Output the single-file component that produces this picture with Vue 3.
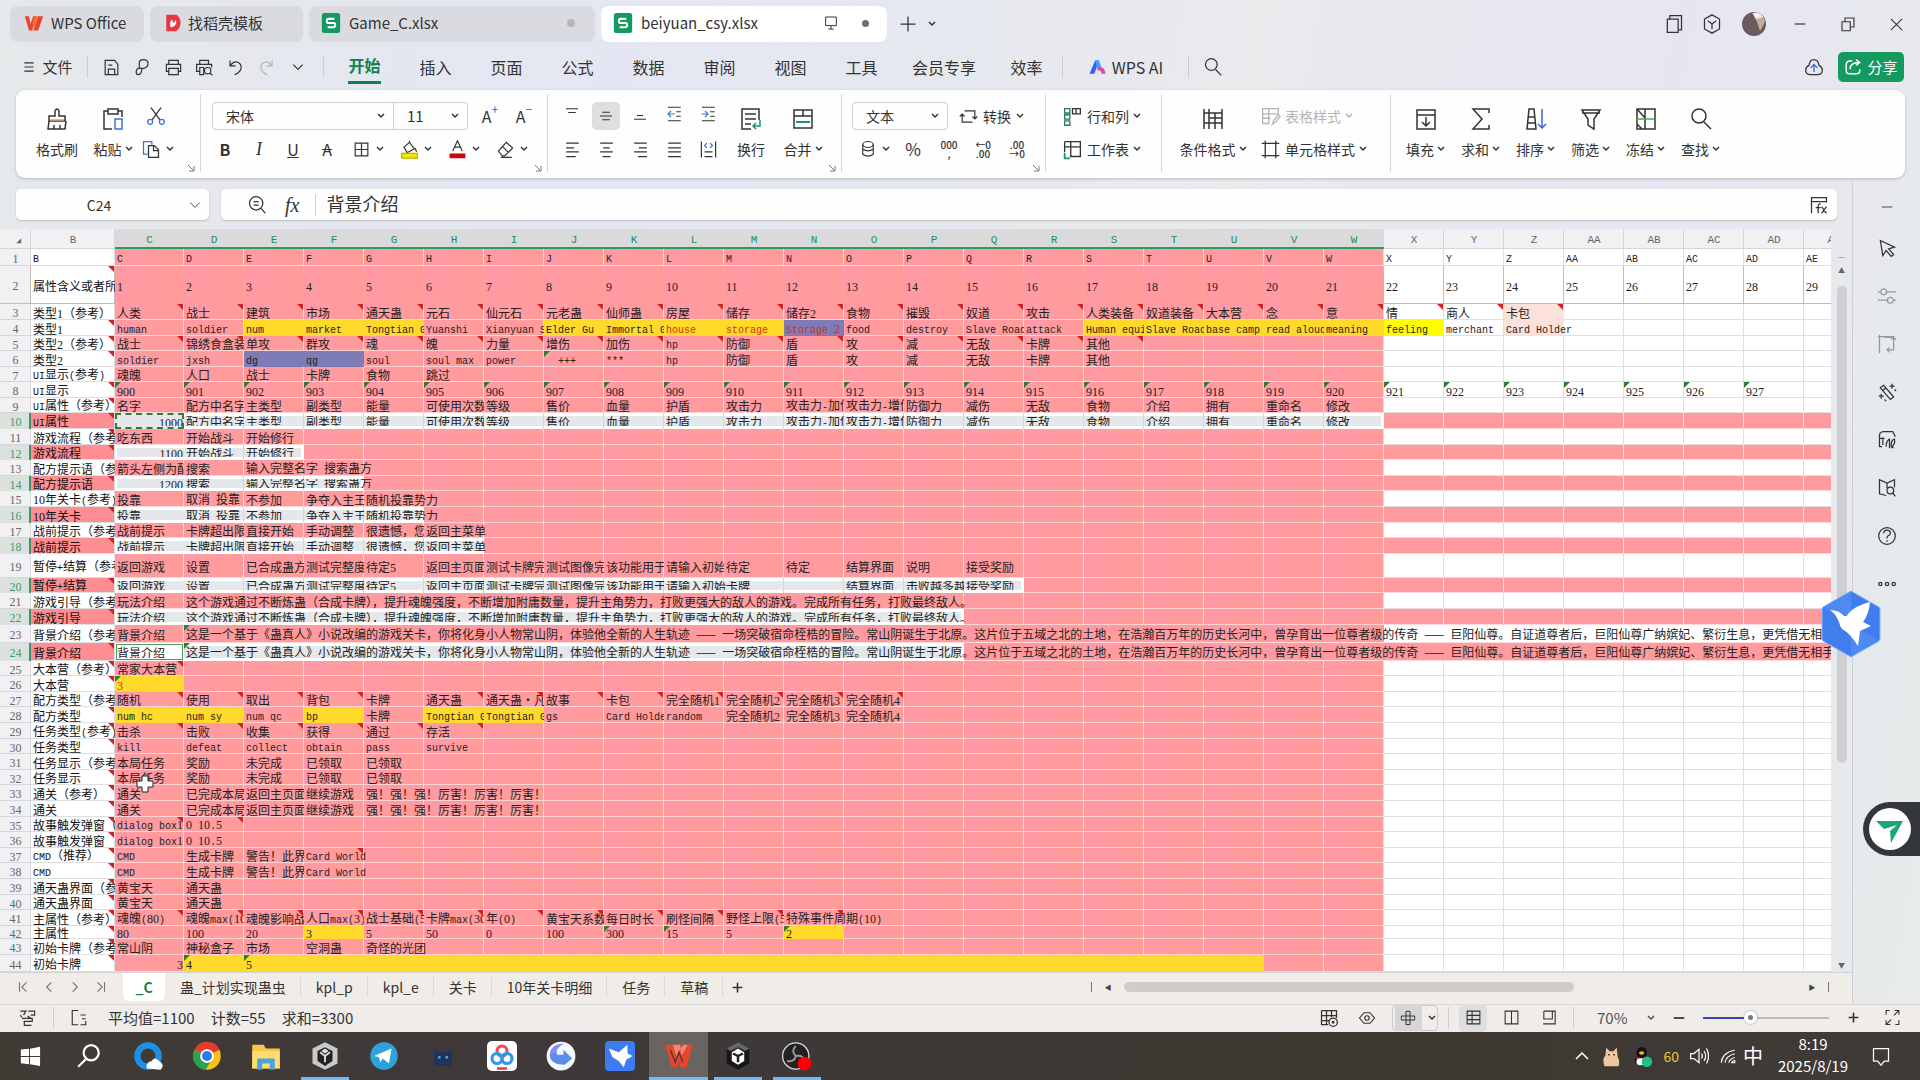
<script setup>
import { h, ref } from 'vue'

const icons = {
  menu: '<path d="M4 5h16M4 12h16M4 19h16"/>',
  save: '<path d="M4 21V3h12l4 5v13zM8 21v-7h8v7M8 9h5"/>',
  exp: '<path d="M8 12V6q0-4 5-4 6 0 6 5t-6 6H8q-4 0-4 5 0 3 3 3t4-5v-3M8 6v7"/>',
  print: '<path d="M6 8V3h12v5M6 17H3V8h18v9h-3M6 13h12v8H6z"/>',
  preview: '<path d="M6 8V3h11v5M6 17H2V8h19v4M6 12h5v9H6z"/><circle cx="16" cy="16" r="4"/><path d="M19 19l3 3"/>',
  undo: '<path d="M5 3v7h7M5 10q4-6 9-5 6 2 5 8-1 5-8 8"/>',
  redo: '<path d="M19 3v7h-7M19 10q-4-6-9-5-6 2-5 8 1 5 8 8"/>',
  search: '<circle cx="10" cy="9" r="7"/><path d="M15 15l7 7"/>',
  zoomIn: '<circle cx="11" cy="10" r="8"/><path d="M17 16l5 6M8 8h6M8 12h6"/>',
  cut: '<path d="M6 2l11 15M18 2L7 17"/><circle cx="5" cy="19" r="3" stroke="#3a74d8"/><circle cx="19" cy="19" r="3" stroke="#3a74d8"/>',
  brush: '<path d="M10 9V4q2-4 4 0v5h6v5H4V9zM4 14l-1 8h17l1-8M9 22v-4M15 22v-4"/><path d="M5 13h14" stroke="#e49a7a"/>',
  paste: '<path d="M7 4H3v18h8M17 4h4v6M7 2h10v5H7z"/><path d="M14 12h7v10h-7z" stroke="#3a74d8"/>',
  copy: '<path d="M8 18H3V3h10v4" stroke="#3a74d8"/><path d="M9 8h7l5 5v9H9zM15 8v6h6"/>',
  border: '<path d="M4 4h16v16H4zM12 4v16M4 12h16"/>',
  fill: '<path d="M5 9l7-6 6 8-9 5zM12 3V1M19 10l2 5"/><path d="M2 17h20v6H2z" fill="#f3e900" stroke="#b9b400"/>',
  fontcolor: '<path d="M6 14l6-13 6 13M8 9h8" /><path d="M2 17h20v6H2z" fill="#d5000f" stroke="none"/>',
  eraser: '<path d="M3 14L13 3l8 7-10 10H8zM8 8l8 8M6 22h14"/>',
  top: '<path d="M4 5h16M7 10h10"/>',
  middle: '<path d="M4 12h16M7 7h10M7 17h10"/>',
  bottom: '<path d="M4 19h16M8 14h8"/>',
  outdent: '<path d="M4 3h17M4 21h17M15 9h6M15 15h6"/><path d="M4 12h9M8 8l-4 4 4 4" stroke="#3a74d8"/>',
  indent: '<path d="M4 3h17M4 21h17M15 9h6M15 15h6"/><path d="M3 12h9M8 8l4 4-4 4" stroke="#3a74d8"/>',
  left: '<path d="M4 4h16M4 10h10M4 15h16M4 21h12"/>',
  center: '<path d="M4 4h16M8 10h8M4 15h16M7 21h10"/>',
  right: '<path d="M4 4h16M10 10h10M4 15h16M9 21h11"/>',
  justify: '<path d="M4 4h16M4 10h16M4 15h16M4 21h16"/>',
  distribute: '<path d="M3 2v20M21 2v20M7 15h10M7 21h10"/><path d="M10 4L7 7l3 3M14 4l3 3-3 3" stroke="#3a74d8"/>',
  wrap: '<path d="M20 13V2H3v20h9M6 7h11M6 12h11M6 17h6"/><path d="M21 13v6h-7M17 16l-3 3 3 3" stroke="#159a60"/>',
  merge: '<path d="M3 3h18v18H3zM3 9h18M12 3v6"/><path d="M5 15h14" stroke="#159a60" stroke-width="2"/>',
  convert: '<path d="M7 5h13v10M17 12l3 3 3-3M17 19H4V9M1 12l3-3 3 3"/>',
  coin: '<ellipse cx="12" cy="6" rx="7" ry="4"/><path d="M5 6v13q7 5 14 0V6M5 12q7 5 14 0"/>',
  rowcol: '<path d="M3 3h6v5H3zM3 10h6v5H3zM3 17h6v5H3z" stroke="#27795a"/><path d="M12 3h9v6h-9zM16 3v6"/>',
  sheet: '<path d="M3 3h18v17H9M3 9h18M10 3v17M3 3v12"/><path d="M3 16v6h6" stroke="#159a60" stroke-width="2"/>',
  cond: '<path d="M3 2v20M21 2v20M3 6h18M8 2v20M8 11h13M3 16h18M14 6v16"/>',
  tstyle: '<path d="M21 9V3H3v17h8M3 9h18M10 3v17M3 14h9M14 21l2-5 5-6 2 2-5 6z"/>',
  cstyle: '<path d="M6 2v20M18 2v20M2 5h20M2 19h20"/>',
  fillDown: '<path d="M3 3h18v19H3zM3 8h18M12 10v9M8 15l4 4 4-4"/>',
  sum: '<path d="M20 6V2H4l9 10-9 10h16v-4"/>',
  sort: '<path d="M3 22L5 2h5l2 20zM4 10h7M4 16h8"/><path d="M18 2v19M14 17l4 4 4-4" stroke="#3a62d8"/>',
  filter: '<path d="M3 3h18l-6 9v10l-6-4v-6zM3 6h18"/>',
  freeze: '<path d="M3 2h18v20H3zM11 2v20M3 2l8 9M3 17l5 5"/><path d="M3 12h18" stroke="#52a552"/>',
  close: '<path d="M4 4l16 16M20 4L4 20"/>',
  min: '<path d="M3 12h18"/>',
  restore: '<path d="M4 9h11v12H4zM8 9V4h12v12h-5"/>',
  pages: '<path d="M4 6h13v16H4zM7 6V2h14v17h-4"/>',
  cube: '<path d="M12 1l9 5v12l-9 5-9-5V6zM7 8l5 4 5-4M12 12v6"/>',
  monitor: '<path d="M4 3h16v13H4zM8 21h8M12 16v5"/>',
  plus: '<path d="M12 3v18M3 12h18"/>',
  cloud: '<path d="M7 21q-5 0-5-5 0-4 4-6 1-7 6-7t6 7q4 2 4 6 0 5-5 5z"/><path d="M12 18v-9M8 13l4-4 4 4" stroke="#3a62d8"/>',
  share: '<path d="M11 4H8q-5 0-5 5v8q0 4 4 4h10q4 0 4-4v-2M8 15q0-9 12-9M16 2l5 4-5 4"/>',
  fbox: '<path d="M3 22V3h18v6M3 8h18"/><path d="M14 11q-3-1-3 3v8M8 15h6M15 14l6 8M21 14l-6 8"/>',
  pointer: '<path d="M4 3l17 8-7 2 6 7-3 2-6-7-4 6z"/>',
  sliders: '<circle cx="8" cy="7" r="3.500"/><path d="M1 7h3M12 7h11"/><circle cx="16" cy="17" r="3.500"/><path d="M1 17h11M20 17h3"/>',
  frame: '<path d="M3 1v22M1 3h19v16h-8M9 4h12M15 16l-3 3 3 3M17 7l3-3 3 3"/>',
  wand: '<path d="M4 7l4-3 12 14-4 3zM7 10l4-3M18 2v6M15 5h6M5 14v6M2 17h6M21 9l2 2M9 21l2 2"/>',
  chart: '<path d="M6 20H3V9Q2 2 8 2h11l3 6M7 9v9M3 10h6M11 20q0-7 4-9v11M18 20q4-3 3-9-4 1-4 7 0 4 3 3"/>',
  book: '<path d="M11 21l-8-2V2l9 4 9-4v9M12 6v6"/><circle cx="16" cy="15" r="4"/><path d="M19 18l3 4"/>',
  help: '<circle cx="12" cy="12" r="10"/><path d="M8 9q0-4 4-4t4 4q0 2-3 3-1 1-1 3M12 17v2"/>',
  dots: '<circle cx="4" cy="12" r="2"/><circle cx="12" cy="12" r="2"/><circle cx="20" cy="12" r="2"/>',
  first: '<path d="M6 4v16M18 4l-8 8 8 8"/>',
  prev: '<path d="M16 4l-8 8 8 8"/>',
  next: '<path d="M8 4l8 8-8 8"/>',
  last: '<path d="M18 4v16M6 4l8 8-8 8"/>',
  macro: '<path d="M3 4h7l-3 5M13 4h8v5h-5M12 10l4 3M5 13h13v4H7M8 17v5h9M3 9l2 3"/>',
  stat: '<path d="M11 2H3v19h8M14 8h7M16 13h5M14 21h7V16"/>',
  gridset: '<path d="M3 3h18v9M3 3v17h8M3 9h18M3 15h9M9 3v17M15 3v8"/><circle cx="17" cy="17" r="5"/><circle cx="17" cy="17" r="1"/>',
  eye: '<path d="M2 12l6-7h8l6 7-6 7H8z"/><circle cx="12" cy="12" r="3"/>',
  cross: '<path d="M9 2h6v20H9zM2 9h20v6H2z"/>',
  normal: '<path d="M3 3h18v18H3zM3 9h18M10 3v18M3 15h18"/>',
  split: '<path d="M3 3h18v18H3zM12 3v18"/>',
  pagev: '<path d="M4 3h16v18H3M4 3v11h12V3"/>',
  full: '<path d="M14 9l7-7M15 2h6v6M10 15l-7 7M3 16v6h6M3 8V2h5M21 16v6h-5"/>',
  up: '<path d="M4 16l8-8 8 8"/>',
  sound: '<path d="M2 9h4l6-5v16l-6-5H2zM15 9q2 3 0 6M18 6q4 6 0 12M21 3q5 9 0 18"/>',
  wifi: '<path d="M3 21Q4 8 21 4M8 21q1-9 13-12M13 21q1-5 8-7M17 21q1-3 4-3v3z"/>',
  note: '<path d="M3 3h18v15h-5l-4 5-4-5H3z"/>',
}

const brands = {
  win: '<g fill="#fff"><path d="M2 5l9-1v8H2zM12 4l11-2v10H12zM2 13h9v8l-9-1zM12 13h11v10l-11-2z"/></g>',
  qq: '<circle cx="12" cy="12" r="11" fill="#1f90e8"/><circle cx="12" cy="12" r="6" fill="#3f3a36"/><path d="M11 22q-1-5 4-6 2-4 6 0 5 3 1 7z" fill="#fff"/>',
  chrome: '<circle cx="12" cy="12" r="11" fill="#fbc116"/><path d="M12 12L2 7a11 11 0 0 1 20 0z" fill="#e33b2e"/><path d="M12 12L2 7a11 11 0 0 0 9 16l5-9z" fill="#2ba24c"/><circle cx="12" cy="12" r="5.500" fill="#fff"/><circle cx="12" cy="12" r="4" fill="#2f78ee"/>',
  folder: '<path d="M1 3h9l2 3h11v16H1z" fill="#f6c64a"/><path d="M1 8h22v14H1z" fill="#ffdb70"/><path d="M5 14h14v9h-4v-5H9v5H5z" fill="#4ba3de"/>',
  unity: '<path d="M12 1l10 5v12l-10 5-10-5V6z" fill="#c9c9c9"/><path d="M12 5l6 3v8l-6 4-6-4V8z" fill="#222"/><path d="M12 12l-4-3M12 12l4-3M12 12v5" stroke="#ddd" stroke-width="1.500"/><path d="M12 6l3 2-3 2-3-2z" fill="#ddd"/>',
  tele: '<circle cx="12" cy="12" r="11" fill="#2ca3dc"/><path d="M4 12l14-6-2 12-5-4-2 3-1-4z" fill="#fff"/>',
  ghost: '<path d="M5 20V9l2-3 2 3h6l2-3 2 3v11z" fill="#1d355e"/><path d="M8 13h2M14 13h2" stroke="#58a0d6" stroke-width="2"/>',
  baidu: '<rect x="0" y="0" width="24" height="24" rx="4" fill="#fff"/><g fill="none" stroke-width="2.500"><circle cx="12" cy="8" r="4" stroke="#ef4c55"/><circle cx="8" cy="14" r="4" stroke="#2c9ae8"/><circle cx="16" cy="14" r="4" stroke="#2c9ae8"/></g><path d="M8 22h8" stroke="#e34" stroke-width="2"/>',
  swirl: '<circle cx="12" cy="12" r="11.500" fill="#f5f8ff"/><path d="M14 2Q3 3 3 12q1 7 12 7l6-5-7-7v4H9q-3-4 5-9z" fill="#5b8eea"/><path d="M14 2Q3 3 3 12q4-5 6-1-3-4 5-9z" fill="#8b8cf0"/>',
  bird: '<rect x="0" y="0" width="24" height="24" rx="3" fill="#3d7bf3"/><path d="M3 6l8 3 7-6v7l4 2-5 3-2 6-4-5-5-3z" fill="#fff"/>',
  wps: '<path d="M1 3h22l-5 18h-5l-1-5-2 5H6z" fill="#e8462c"/><path d="M7 3l3 9 3-6 1 6 5-9h-3l-3 3V3z" fill="#fff" opacity=".35"/><path d="M5 7l4 10 3-8 3 8" fill="none" stroke="#4b3631" stroke-width="1"/>',
  wpsLight: '<path d="M1 4h5l2 9 3-9h4l-5 17H6zM11 21l6-17h6l-6 17z" fill="#e8462c"/><path d="M13 4h4l-5 13-2-5z" fill="#ff6a42"/>',
  hub: '<path d="M12 1l9 5v12l-9 5-9-5V6z" fill="#17171a"/><path d="M3 6l9-5 9 5-3 2-6-3-6 3z" fill="#666"/><path d="M12 6l5 3v7l-5 3-5-3V9z" fill="#fff"/><path d="M12 12v5M12 12L8 10M12 12l4-2" stroke="#222" stroke-width="2"/>',
  obs: '<circle cx="11" cy="12" r="10.500" fill="#222" stroke="#ddd"/><path d="M11 4q-4 4 0 8M4 16q6 1 7-4M18 16q-1-5-7-4" stroke="#999" stroke-width="1.500" fill="none"/><circle cx="18" cy="18" r="5.500" fill="#f00"/>',
  docer: '<path d="M3 1h14q5 4 5 11t-6 11H3z" fill="#e5383f"/><path d="M9 18q-3-6 2-11 0 4 2 5l3-4q2 8-7 10z" fill="#fff"/>',
  sheetS: '<rect x="1" y="0" width="22" height="24" rx="3" fill="#139a61"/><path d="M16 7H9q-2 0-2 2.500T9 12h6q2 0 2 2.500T15 17H8" fill="none" stroke="#fff" stroke-width="2.500"/>',
  ai: '<path d="M2 20L9 3h5L8 20z" fill="#3b5cf5"/><path d="M9 3h5l3 9q-4-1-5 3z" fill="#33a4ff"/><path d="M12 12q9-3 10 8h-5q0-5-5-4z" fill="#e04aa8"/>',
  avatar: '<circle cx="12" cy="12" r="12" fill="#6b5a60"/><path d="M10 1q12-1 13 9l-5 9-3-9z" fill="#c9ab9a"/><path d="M11 1q6-2 10 4l-7 2z" fill="#f5efec"/>',
  cat: '<path d="M4 23q-3-9 1-12L6 2l4 4h4l4-4 1 10q3 6 1 11z" fill="#ecc7a0"/><path d="M8 10h2M14 10h2" stroke="#5a3b2a" stroke-width="1.500"/>',
  penguin: '<ellipse cx="11" cy="8" rx="6" ry="7" fill="#111"/><ellipse cx="11" cy="16" rx="8" ry="6" fill="#111"/><path d="M5 12q6 4 12 0v4H5z" fill="#e02c2c"/><ellipse cx="11" cy="8" rx="3" ry="2" fill="#f6b62c"/><ellipse cx="10" cy="18" rx="5" ry="4" fill="#fff"/><circle cx="17" cy="18" r="6" fill="#1cc488"/>',
}

const Icon = (p) => h('svg', {
  viewBox: '0 0 24 24', width: p.s || 24, height: p.s || 24, fill: 'none',
  stroke: 'currentColor', 'stroke-width': p.w || 1.5, 'aria-hidden': 'true', innerHTML: icons[p.n],
})
Icon.props = ['n', 's', 'w']
const Brand = (p) => h('svg', { viewBox: '0 0 24 24', width: p.s || 30, height: p.s || 30, 'aria-hidden': 'true', innerHTML: brands[p.n] })
Brand.props = ['n', 's']
const Chev = () => h('svg', { class: 'chev', viewBox: '0 0 8 8', width: 8, height: 8, fill: 'none', stroke: 'currentColor', 'stroke-width': 1.5, 'aria-hidden': 'true', innerHTML: '<path d="M1 2l3 3 3-3"/>' })
const Corner = () => h('svg', { viewBox: '0 0 8 8', width: 8, height: 8, fill: 'none', stroke: '#777', innerHTML: '<path d="M1 1l5 5M7 2v5H2"/>' })

const menus = ['开始', '插入', '页面', '公式', '数据', '审阅', '视图', '工具', '会员专享', '效率']
const quick = ['save', 'exp', 'print', 'preview', 'undo', 'redo']
const bigTools = [['fillDown', '填充'], ['sum', '求和'], ['sort', '排序'], ['filter', '筛选'], ['freeze', '冻结'], ['search', '查找']]
const sheets = ['_C', '蛊_计划实现蛊虫', 'kpl_p', 'kpl_e', '关卡', '10年关卡明细', '任务', '草稿']
const side = ['min', 'pointer', 'sliders', 'frame', 'wand', 'chart', 'book', 'help', 'dots']
const tasks = [['qq'], ['chrome'], ['folder'], ['unity', 'open'], ['tele'], ['ghost'], ['baidu'], ['swirl'], ['bird'], ['wps', 'open active'], ['hub', 'open'], ['obs', 'open']]
const cellRef = ref('C24')
const formula = ref('背景介绍')
const zoom = ref(36)

const cols = 'CDEFGHIJKLMNOPQRSTUVWXYZ'.split('').concat(['AA', 'AB', 'AC', 'AD', 'AE'])
const seq = (from, n) => Array.from({ length: n }, (_, i) => from + i).join('|')
const guide = '这个游戏通过不断炼蛊（合成卡牌），提升魂魄强度，不断增加附庸数量，提升主角势力，打败更强大的敌人的游戏。完成所有任务，打败最终敌人。'
const story = '这是一个基于《蛊真人》小说改编的游戏关卡，你将化身小人物常山阴，体验他全新的人生轨迹 —— 一场突破宿命桎梏的冒险。常山阴诞生于北原。这片位于五域之北的土地，在浩瀚百万年的历史长河中，曾孕育出一位尊者级的传奇 —— 巨阳仙尊。自证道尊者后，巨阳仙尊广纳嫔妃、繁衍生息，更凭借无相手段'
const props9 = '配方中名字|主类型|副类型|能量|可使用次数|等级|售价|血量|护盾|攻击力|攻击力-加伤|攻击力-增伤|防御力|减伤|无敌|食物|介绍|拥有|重命名|修改'
const camp = '投靠|取消 投靠|不参加|争夺入主王庭|随机投靠势力'
const hint = '战前提示|卡牌超出限制|直接开始|手动调整|很遗憾，您|返回主菜单'
const pause = '返回游戏|设置|已合成蛊方|测试完整度|待定5|返回主页面|测试卡牌完|测试图像完|该功能用于|'
const task = '本局任务|奖励|未完成|已领取|已领取'
const win = '通关|已完成本局|返回主页面|继续游戏|强！强！强！厉害！厉害！厉害！'
const cmd = 'CMD|生成卡牌|警告！此界面|Card World'

// height, label, cells, options: y yellow, p purple, r comment marks, g text-number marks, sel last selected column
const source = [
  [17, 'B', cols.join('|')],
  [38, '属性含义或者所属', seq(1, 29)],
  [16, '类型1（参考）', '人类|战士|建筑|市场|通天蛊|元石|仙元石|元老蛊|仙师蛊|房屋|储存|储存2|食物|摧毁|奴道|攻击|人类装备|奴道装备|大本营|念|意|情|商人|卡包', { r: 'CDEFGHIJKLMNOPQRSTUVWXYZ' }],
  [16, '类型1', 'human|soldier|num|market|Tongtian Gu|Yuanshi|Xianyuan Shi|Elder Gu|Immortal Gu|house|storage|Storage 2|food|destroy|Slave Road|attack|Human equip|Slave Road|base camp|read aloud|meaning|feeling|merchant|Card Holder', { y: 'EFGJKLMSTUVW', p: 'N', red: 'LMN' }],
  [15, '类型2（参考）', '战士|锦绣食盒装|单攻|群攻|魂|魄|力量|增伤|加伤|hp|防御|盾|攻|减|无敌|卡牌|其他', { r: 'CDEFGHIJKLMNOPQRS' }],
  [16, '类型2', 'soldier|jxsh|dg|qg|soul|soul max|power|  +++|***|hp|防御|盾|攻|减|无敌|卡牌|其他', { p: 'EF', g: 'J' }],
  [15, 'UI显示(参考)', '魂魄|人口|战士|卡牌|食物|跳过'],
  [16, 'UI显示', seq(900, 28), { g: 'all' }],
  [15, 'UI属性（参考）', '名字|' + props9],
  [16, 'UI属性', '1000|' + props9, { sel: 'W', num: 1 }],
  [16, '游戏流程（参考）', '吃东西|开始战斗|开始修行'],
  [15, '游戏流程', '1100|开始战斗|开始修行', { sel: 'E', num: 1 }],
  [16, '配方提示语（参考）', '箭头左侧为配方|搜索|输入完整名字 搜索蛊方'],
  [15, '配方提示语', '1200|搜索|输入完整名字 搜索蛊方', { sel: 'F', num: 1 }],
  [16, '10年关卡(参考)', camp],
  [16, '10年关卡', camp, { sel: 'G' }],
  [15, '战前提示（参考）', hint],
  [16, '战前提示', hint, { sel: 'H' }],
  [24, '暂停+结算（参考）', pause + '请输入初始|待定|待定|结算界面|说明|接受奖励'],
  [15, '暂停+结算', pause + '请输入初始卡牌|||结算界面|击败越多越|接受奖励', { sel: 'Q' }],
  [16, '游戏引导（参考）', '玩法介绍|' + guide, { long: 13 }],
  [16, '游戏引导', '玩法介绍|' + guide, { sel: 'P', long: 13 }],
  [18, '背景介绍（参考）', '背景介绍|' + story, { g: 'D', long: 30 }],
  [18, '背景介绍', '背景介绍|' + story, { sel: 'P', g: 'D', long: 30 }],
  [15, '大本营（参考）', '常家大本营', { r: 'C' }],
  [16, '大本营', '3', { y: 'C', g: 'C', red: 'C' }],
  [15, '配方类型（参考）', '随机|使用|取出|背包|卡牌|通天蛊|通天蛊·凡|故事|卡包|完全随机1|完全随机2|完全随机3|完全随机4', { r: 'CDEFHIJKLMNO' }],
  [16, '配方类型', 'num hc|num sy|num qc|bp|卡牌|Tongtian Gu|Tongtian Gu|gs|Card Holder|random|完全随机2|完全随机3|完全随机4', { y: 'CDFHI' }],
  [16, '任务类型(参考)', '击杀|击败|收集|获得|通过|存活', { r: 'CDEFGH' }],
  [15, '任务类型', 'kill|defeat|collect|obtain|pass|survive'],
  [16, '任务显示（参考）', task],
  [15, '任务显示', task],
  [16, '通关（参考）', win],
  [16, '通关', win],
  [15, '故事触发弹窗（参考）', 'dialog box1|0 10.5', { r: 'CD' }],
  [16, '故事触发弹窗', 'dialog box1|0 10.5'],
  [15, 'CMD（推荐）', cmd, { r: 'F' }],
  [16, 'CMD', cmd],
  [16, '通天蛊界面（参考）', '黄宝天|通天蛊'],
  [15, '通天蛊界面', '黄宝天|通天蛊'],
  [16, '主属性（参考）', '魂魄(80)|魂魄max(100)|魂魄影响战力|人口max(3)|战士基础(5)|卡牌max(30)|年(0)|黄宝天系数|每日时长|刷怪间隔|野怪上限(5)|特殊事件周期(10)', { r: 'CDEFGHIJKLMN' }],
  [13, '主属性', '80|100|20|3|5|50|0|100|300|15|5|2', { y: 'FN', g: 'KLN' }],
  [16, '初始卡牌（参考）', '常山阴|神秘盒子|市场|空洞蛊|奇怪的光团'],
  [17, '初始卡牌', '3|4|5', { y: 'DEFGHIJKLMNOPQRSTU', g: 'DE', num: 1 }],
]
const noMark = [1, 3, 7, 13, 15, 17, 19, 21, 23, 27, 31]
const parts = (t) => t.split(/([0-9]+|[\x20-\x2f\x3a-\x7e]+)/).filter(Boolean).map((s) => ({
  s, kind: /^[0-9]/.test(s) ? 'digits' : /^[\x20-\x7e]/.test(s) ? 'latin' : '',
}))

const rows = source.map(([height, label, text, o = {}], i) => {
  const n = i + 1
  const values = text.split('|')
  const last = o.sel ? cols.indexOf(o.sel) : -1
  const cells = cols.map((c, k) => {
    const has = (key) => c.length === 1 && (o[key] || '').includes(c)
    const cls = {
      pink: k < 21 || last >= 0, inner: k < 21, sel: k <= last, selEnd: k === last, selStart: k === 0 && last >= 0,
      yellow: has('y'), purple: has('p'), redText: has('red'), num: k === 0 && o.num,
      clip: !!values[k + 1], run: o.long && k > 0 && k < o.long,
      bright: n === 4 && c === 'X', peach: (n === 3 || n === 4) && c === 'Z',
      copied: n === 10 && k === 0, current: n === 24 && k === 0,
    }
    return { cls, parts: parts(values[k] || ''), r: has('r'), g: has('g') || (o.g === 'all' && values[k]) }
  })
  return { n, height, label: parts(label), cells, on: last >= 0, mark: !noMark.includes(n) }
})
</script>

<template>
  <div class="app">
    <header class="titlebar">
      <button class="doc home"><Brand n="wpsLight" s="20" />WPS Office</button>
      <button class="doc docer"><Brand n="docer" s="18" />找稻壳模板</button>
      <button class="doc file"><Brand n="sheetS" s="20" />Game_C.xlsx<i class="dot grow"></i></button>
      <button class="doc file cur"><Brand n="sheetS" s="20" />beiyuan_csy.xlsx<Icon class="grow" n="monitor" s="16" /><i class="dot dark"></i></button>
      <button class="bare tabadd" aria-label="新建"><Icon n="plus" s="20" /></button>
      <button class="bare" aria-label="标签列表"><Chev /></button>
      <div class="winbtns">
        <button class="bare w38" aria-label="标签"><Icon n="pages" s="20" /></button>
        <button class="bare w38" aria-label="应用"><Icon n="cube" s="20" /></button>
        <button class="bare w45" aria-label="账号"><Brand n="avatar" s="24" /></button>
        <button class="bare w48" aria-label="最小化"><Icon n="min" s="14" w="2" /></button>
        <button class="bare w48" aria-label="还原"><Icon n="restore" s="18" /></button>
        <button class="bare w48" aria-label="关闭"><Icon n="close" s="17" /></button>
      </div>
    </header>

    <nav class="menubar">
      <button class="bare filebtn"><Icon n="menu" s="14" w="2" />文件</button>
      <i class="vline"></i>
      <div class="quick">
        <button v-for="q in quick" :key="q" class="bare" :class="{ off: q === 'redo' }" :aria-label="q"><Icon :n="q" s="19" /></button>
        <button class="bare" aria-label="更多"><Icon n="next" s="14" w="2" class="down" /></button>
      </div>
      <i class="vline"></i>
      <div class="menus">
        <button v-for="(m, i) in menus" :key="m" class="bare menu" :class="{ on: !i }"><span>{{ m }}</span></button>
      </div>
      <i class="vline"></i>
      <button class="bare ai"><Brand n="ai" s="19" />WPS AI</button>
      <i class="vline"></i>
      <button class="bare find" aria-label="搜索"><Icon n="search" s="20" /></button>
      <div class="shares">
        <Icon n="cloud" s="20" />
        <button class="share"><Icon n="share" s="18" w="2" />分享</button>
      </div>
    </nav>

    <section class="ribbon">
      <div class="group g1">
        <button class="big"><Icon n="brush" />格式刷</button>
        <button class="big"><Icon n="paste" /><span>粘贴<Chev /></span></button>
        <div class="stack">
          <div class="line"><button class="tool" aria-label="剪切"><Icon n="cut" s="20" /></button></div>
          <div class="line"><button class="tool" aria-label="复制"><Icon n="copy" s="20" /><Chev /></button></div>
        </div>
        <Corner class="corner" />
      </div>
      <div class="group g2">
        <div class="stack">
          <div class="line">
            <label class="pick font"><select aria-label="字体"><option>宋体</option></select><Chev /></label>
            <label class="pick size"><select aria-label="字号"><option>11</option></select><Chev /></label>
            <button class="tool letter">A<sup>+</sup></button>
            <button class="tool letter">A<sup>−</sup></button>
          </div>
          <div class="line">
            <button class="tool w34 b">B</button>
            <button class="tool w34 i">I</button>
            <button class="tool w34 u">U</button>
            <button class="tool w34 s">A</button>
            <button v-for="k in ['border', 'fill', 'fontcolor', 'eraser']" :key="k" class="tool w48" :aria-label="k"><Icon :n="k" s="19" /><Chev /></button>
          </div>
        </div>
        <Corner class="corner" />
      </div>
      <div class="group g3">
        <div class="stack">
          <div class="line">
            <button v-for="k in ['top', 'middle', 'bottom', 'outdent', 'indent']" :key="k" class="tool w34" :aria-label="k"><span :class="{ pressed: k === 'middle' }"><Icon :n="k" s="18" /></span></button>
          </div>
          <div class="line">
            <button v-for="k in ['left', 'center', 'right', 'justify', 'distribute']" :key="k" class="tool w34" :aria-label="k"><Icon :n="k" s="19" /></button>
          </div>
        </div>
        <button class="big w52"><Icon n="wrap" />换行</button>
        <button class="big w52"><Icon n="merge" /><span>合并<Chev /></span></button>
        <Corner class="corner" />
      </div>
      <div class="group g4">
        <div class="stack">
          <div class="line">
            <label class="pick fmt"><select aria-label="数字格式"><option>文本</option></select><Chev /></label>
            <button class="tool conv"><Icon n="convert" s="19" />转换<Chev /></button>
          </div>
          <div class="line">
            <button class="tool w48" aria-label="货币"><Icon n="coin" s="18" /><Chev /></button>
            <button class="tool w34 pct">%</button>
            <button class="tool w34 dec">000<br>,</button>
            <button class="tool w34 dec">←0<br>.00</button>
            <button class="tool w34 dec">.00<br>→0</button>
          </div>
        </div>
        <Corner class="corner" />
      </div>
      <div class="group g5">
        <div class="stack">
          <div class="line"><button class="tool wide"><Icon n="rowcol" s="21" />行和列<Chev /></button></div>
          <div class="line"><button class="tool wide"><Icon n="sheet" s="21" />工作表<Chev /></button></div>
        </div>
      </div>
      <div class="group g6">
        <button class="big"><Icon n="cond" /><span>条件格式<Chev /></span></button>
        <div class="stack">
          <div class="line"><button class="tool wide off"><Icon n="tstyle" s="21" />表格样式<Chev /></button></div>
          <div class="line"><button class="tool wide"><Icon n="cstyle" s="21" />单元格样式<Chev /></button></div>
        </div>
      </div>
      <div class="group g7">
        <button v-for="t in bigTools" :key="t[1]" class="big w55"><Icon :n="t[0]" /><span>{{ t[1] }}<Chev /></span></button>
      </div>
    </section>

    <main class="work">
      <div class="book">
        <div class="formulabar">
          <label class="namebox"><input v-model="cellRef" aria-label="名称框"><Icon n="next" s="14" class="down" /></label>
          <div class="fx">
            <Icon n="zoomIn" s="20" /><em>fx</em><i class="vline"></i>
            <input v-model="formula" aria-label="编辑栏">
            <Icon n="fbox" s="20" />
          </div>
        </div>

        <div class="gridrow">
          <div class="grid">
            <table>
              <colgroup><col class="c0"><col class="c1"><col class="c2"><col v-for="k in 28" :key="k" class="c3"></colgroup>
              <thead>
                <tr>
                  <th class="sel-all">◢</th><th>B</th>
                  <th v-for="(c, k) in cols" :key="c" :class="{ on: k < 21 }">{{ c }}</th>
                </tr>
              </thead>
              <tbody>
                <tr v-for="r in rows" :key="r.n" :class="{ frozen: r.n === 2 }">
                  <th :class="{ on: r.on }"><div class="cell" :style="{ height: r.height + 'px' }">{{ r.n }}</div></th>
                  <td class="label clip" :class="{ hot: r.on }">
                    <div class="box">
                      <div class="cell" :style="{ height: r.height + 'px' }"><p><span v-for="(p, i) in r.label" :key="i" :class="p.kind">{{ p.s }}</span></p></div>
                      <i v-if="r.mark" class="cmt"></i>
                    </div>
                  </td>
                  <td v-for="(c, k) in r.cells" :key="k" :class="c.cls">
                    <div class="box">
                      <div class="cell" :style="{ height: r.height + 'px' }"><p><span v-for="(p, i) in c.parts" :key="i" :class="p.kind">{{ p.s }}</span></p></div>
                      <i v-if="c.r" class="cmt"></i><i v-if="c.g" class="err"></i>
                    </div>
                  </td>
                </tr>
              </tbody>
            </table>
          </div>
          <div class="vscroll"><b>—</b><b>▲</b><div class="track"><i></i></div><b>▼</b></div>
        </div>

        <div class="sheetbar">
          <div class="navs"><button v-for="k in ['first', 'prev', 'next', 'last']" :key="k" class="bare" :aria-label="k"><Icon :n="k" s="14" w="2" /></button></div>
          <button v-for="(s, i) in sheets" :key="s" class="bare sheet" :class="{ on: !i }">{{ s }}</button>
          <button class="bare add" aria-label="新建工作表"><Icon n="plus" s="13" w="3" /></button>
          <div class="hscroll"><i class="bar"></i><b>◀</b><div class="htrack"><i></i></div><b>▶</b><i class="bar"></i></div>
        </div>
      </div>
      <aside class="side">
        <button v-for="(s, i) in side" :key="s" class="bare" :class="{ pale: i === 2 || i === 3 }" :aria-label="s"><Icon :n="s" :s="i ? 20 : 14" /></button>
      </aside>
    </main>

    <footer class="status">
      <Icon n="macro" s="19" /><i class="vline"></i><Icon n="stat" s="18" />
      <span class="sums"><span>平均值=1100</span><span>计数=55</span><span>求和=3300</span></span>
      <div class="views">
        <button class="bare v38" aria-label="显示设置"><Icon n="gridset" s="20" /></button>
        <button class="bare v38" aria-label="护眼模式"><Icon n="eye" s="18" /></button>
        <button class="bare reading" aria-label="阅读模式"><span><Icon n="cross" s="16" /></span><Chev /></button>
        <i class="vline"></i>
        <button class="bare v38" aria-label="普通视图"><span class="pressed"><Icon n="normal" s="17" /></span></button>
        <button class="bare v38" aria-label="分页预览"><Icon n="split" s="17" /></button>
        <button class="bare v38" aria-label="页面布局"><Icon n="pagev" s="17" /></button>
        <i class="vline"></i>
        <label class="zoomsel"><select aria-label="缩放"><option>70%</option></select><Chev /></label>
        <button class="bare v48" aria-label="缩小"><Icon n="min" s="14" w="3" /></button>
        <input v-model="zoom" class="slider" type="range" aria-label="缩放比例">
        <button class="bare v48" aria-label="放大"><Icon n="plus" s="13" w="3" /></button>
        <button class="bare v30" aria-label="全屏"><Icon n="full" s="17" /></button>
      </div>
    </footer>

    <div class="taskbar">
      <button class="bare app-btn" aria-label="开始"><Brand n="win" s="22" /></button>
      <button class="bare app-btn flip" aria-label="搜索"><Icon n="search" s="26" w="2" /></button>
      <button v-for="t in tasks" :key="t[0]" class="bare app-btn" :class="t[1]" :aria-label="t[0]"><Brand :n="t[0]" s="30" /></button>
      <div class="tray">
        <Icon n="up" s="18" w="2" /><Brand n="cat" s="21" /><Brand n="penguin" s="21" />
        <span class="sixty">60</span><Icon n="sound" s="20" /><Icon n="wifi" s="18" /><span class="ime">中</span>
        <div class="clock"><span>8:19</span><span>2025/8/19</span></div>
        <Icon n="note" s="20" />
      </div>
    </div>

    <svg class="hexbird" viewBox="0 0 60 68" aria-hidden="true">
      <path d="M30 1l28 16q1 1 1 3v28q0 2-1 3L30 67 2 51q-1-1-1-3V20q0-2 1-3z" fill="#3f7eec" stroke="#8db8ff" />
      <path d="M30 1v33L2 17zM30 34l28 17-28 16z" fill="#5a93f5" opacity=".6" />
      <path d="M9 20q9 0 14 6 3 1 4-2 6-8 22-12-1 12-7 20l8 4-11 5q-1 9-2 15-8-13-16-17-2-2-3-7-3-8-9-12z" fill="#fff" />
    </svg>
    <svg class="paper" viewBox="0 0 58 56" aria-hidden="true">
      <path d="M28 1h30v54H28a27 27 0 0 1 0-54z" fill="#33363a" />
      <circle cx="28" cy="28" r="21" fill="#fff" />
      <path d="M14 20h27L29 42l-1-12 7-6-13 4z" fill="#1aa873" />
    </svg>
    <svg class="mouse" viewBox="0 0 18 18" aria-hidden="true"><path d="M6 1h6v5h5v6h-5v5H6v-5H1V6h5z" fill="#fff" stroke="#222" /></svg>
  </div>
</template>

<style>
body { margin: 0; overflow: hidden; }
</style>

<style scoped>
.app { position: relative; display: flex; flex-direction: column; height: 100vh; overflow: hidden; color: #333; font: 14px/20px "Noto Sans CJK SC", sans-serif; background: linear-gradient(100deg, #e6e9ea, #e4e6f3 30%, #e8eaec 60%, #e6e6f2 80%, #e7ebea); }
button, input, select { font: inherit; color: inherit; border: 0; padding: 0; margin: 0; background: none; outline: 0; }
select { appearance: none; }
svg { flex: none; }
p { margin: 0; }
.bare, .tool, .big { display: flex; align-items: center; justify-content: center; white-space: nowrap; }
.vline { flex: none; width: 1px; height: 22px; background: #cdced4; }
.off { color: #b4b4b4; }
.down { transform: rotate(90deg); }
.pressed { display: flex; align-items: center; justify-content: center; width: 28px; height: 28px; border-radius: 5px; background: #dfdfdf; }

.titlebar { display: flex; align-items: center; height: 48px; padding-left: 10px; flex: none; }
.doc { display: flex; align-items: center; gap: 8px; height: 36px; box-sizing: border-box; border-radius: 8px; background: #dadbe1; font-size: 15px; color: #333; margin-right: 6px; padding: 0 14px 2px; white-space: nowrap; }
.home { width: 134px; gap: 7px; }
.docer { width: 153px; gap: 6px; }
.file { width: 286px; padding-left: 12px; }
.cur { background: #fff; padding-right: 18px; }
.grow { margin-left: auto; }
.cur .grow { margin-right: 15px; }
.dot { width: 8px; height: 8px; border-radius: 50%; background: #b5b6bd; }
.dot.grow { margin-right: 6px; }
.dot.dark { width: 7px; height: 7px; background: #6c7266; }
.titlebar > .bare { width: 24px; }
.titlebar > .tabadd { margin-left: 3px; }
.winbtns { display: flex; margin-left: auto; }
.w38 { width: 38px; } .w45 { width: 45px; } .w48 { width: 48px; } .w34 { width: 34px; } .w52 { width: 52px; } .w55 { width: 55px; }

.menubar { display: flex; align-items: center; height: 42px; flex: none; padding-bottom: 4px; box-sizing: border-box; }
.filebtn { gap: 6px; width: 87px; padding-left: 8px; box-sizing: border-box; font-size: 15px; }
.quick { display: flex; width: 235px; padding-left: 8px; box-sizing: border-box; }
.quick .bare { width: 31px; }
.menus { display: flex; margin-left: 5px; }
.menu { min-width: 71px; padding: 0 15px; font-size: 16px; line-height: 34px; box-sizing: border-box; height: 36px; }
.menu.on span { color: #14804c; font-weight: 700; border-bottom: 3px solid #14804c; line-height: 31px; }
.ai { width: 125px; gap: 5px; font-size: 16px; }
.find { width: 48px; }
.shares { display: flex; align-items: center; gap: 14px; margin-left: auto; padding-right: 16px; }
.share { display: flex; align-items: center; justify-content: center; gap: 5px; width: 66px; height: 30px; border-radius: 5px; background: #149a61; color: #fff; font-size: 15px; }

.ribbon { display: flex; flex: none; height: 88px; margin: 0 15px 0 16px; padding: 4px 0; box-sizing: border-box; border-radius: 9px; background: #fefefe; box-shadow: 0 1px 3px #b7b8be; }
.group { position: relative; display: flex; height: 78px; box-sizing: border-box; border-right: 1px solid #d5d5d8; }
.g1 { width: 185px; padding-left: 13px; }
.g2 { width: 347px; padding-left: 11px; }
.g3 { width: 294px; padding-left: 7px; }
.g4 { width: 204px; padding-left: 10px; }
.g5 { width: 116px; padding-left: 16px; }
.g6 { width: 229px; padding-left: 13px; }
.g7 { border: 0; padding-left: 7px; }
.corner { position: absolute; right: 5px; bottom: 0; }
.big { flex-direction: column; width: 56px; height: 68px; padding-top: 9px; gap: 8px; box-sizing: border-box; }
.g6 .big { width: 76px; margin-right: 9px; }
.big span { display: flex; align-items: center; gap: 3px; }
.big.w52 { width: 52px; }
.big.w55 { width: 55px; }
.stack { display: flex; flex-direction: column; gap: 1px; padding-top: 6px; }
.line { display: flex; align-items: center; height: 32px; }
.tool { gap: 5px; height: 28px; }
.g1 .tool { min-width: 30px; }
.wide { gap: 4px; }
.pick { position: relative; display: flex; align-items: center; height: 28px; padding: 0 8px 0 13px; border: 1px solid #ccccd2; box-sizing: border-box; }
.pick select { flex: 1; min-width: 0; }
.font { width: 182px; border-radius: 4px 0 0 4px; }
.size { width: 74px; border-left: 0; border-radius: 0 4px 4px 0; font-size: 15px; }
.fmt { width: 96px; border-radius: 4px; margin-right: 11px; }
.letter { width: 34px; gap: 0; font-size: 16px; }
.size + .letter { margin-left: 5px; }
.letter sup { font-size: 12px; color: #3a62d8; align-self: flex-start; line-height: 14px; }
.b { font-weight: 700; font-size: 16px; } .i { font: italic 18px "Liberation Serif", serif; } .u { text-decoration: underline; font-size: 16px; } .s { text-decoration: line-through; font-size: 16px; }
.g2 .line:last-child { margin-left: -4px; }
.g4 .line .w48 { width: 44px; }
.pct { font-size: 17px; margin-right: 2px; }
.dec { font-size: 10px; line-height: 9px; font-weight: 500; }

.work { display: flex; flex: 1; min-height: 0; }
.book { flex: 1; min-width: 0; display: flex; flex-direction: column; border-right: 1px solid #cfd0d6; }
.formulabar { display: flex; gap: 12px; padding: 11px 15px 9px 16px; height: 51px; box-sizing: border-box; flex: none; }
.namebox, .fx { display: flex; align-items: center; background: #fefefe; border-radius: 5px; box-shadow: 0 1px 2px #bdbdc4; }
.namebox { width: 193px; padding-right: 7px; box-sizing: border-box; }
.namebox input { flex: 1; min-width: 0; text-align: center; font: 14px "Noto Sans CJK SC", sans-serif; padding-right: 6px; }
.fx { flex: 1; padding: 0 8px 0 26px; }
.fx em { font: italic 20px/24px "Liberation Serif", serif; margin: 0 16px 0 18px; }
.fx input { flex: 1; min-width: 0; padding: 0 0 3px 10px; font-size: 18px; line-height: 26px; }
.gridrow { display: flex; flex: 1; min-height: 0; }
.grid { flex: 1; min-width: 0; overflow: hidden; background: #fff; }
table { width: 1864px; table-layout: fixed; border-collapse: separate; border-spacing: 0; font-size: 12px; }
.c0 { width: 31px; } .c1 { width: 84px; } .c2 { width: 69px; } .c3 { width: 60px; }
th { padding: 0; font: 12px "Liberation Serif", serif; color: #666; background: #f1f1f3; box-shadow: inset -1px -1px #d5d5da; text-align: center; }
thead th { height: 18px; padding-top: 2px; font: 11px "Liberation Mono", monospace; }
thead th.on { color: #1a8f5d; background: #d9dad9; box-shadow: inset 0 -2px #2b9a63; }
thead .sel-all { font-size: 8px; text-align: right; padding-right: 10px; }
tbody th.on { color: #3f9a70; background: #dbe2dd; box-shadow: inset -2px 0 #3c9468; }
tbody th .cell { padding: 2px 0 0; justify-content: center; }
td { padding: 0; color: #262222; box-shadow: inset -1px -1px #dfdfe2; }
.box { position: relative; }
.cell { display: flex; align-items: center; padding: 1px 0 0 2px; box-sizing: border-box; white-space: pre; line-height: 14px; }
.latin, .digits { line-height: 12px; white-space: pre; }
.latin { font-family: "Liberation Mono", monospace; font-size: 10px; }
.digits { font-family: "Liberation Serif", serif; font-size: 12px; }
.clip .cell { overflow: hidden; }
.label { color: #111; }
.label.hot { background: #ff8e92; }
.pink { background: #ff9b9f; box-shadow: inset -1px -1px #ffd9d9; }
.inner { background: linear-gradient(110deg, #ff9aa6, #ff9c98); box-shadow: inset -1px -1px #ffd4d4; }
.frozen td, .frozen th { box-shadow: inset -1px -1px #c6b9bb; }
.run { box-shadow: inset 0 -1px #ffdede; }
.yellow { background: #ffda2b; box-shadow: none; }
.purple { background: #7d7cb6; box-shadow: none; }
.bright { background: #ff0; box-shadow: none; }
.peach { background: #fce1da; box-shadow: none; }
.redText { color: #d2301c; }
.sel { background: #e5e8ea; box-shadow: inset -1px 0 #d4d7d4, inset 0 3px #fff, inset 0 -3px #fff; }
.sel.run { box-shadow: inset 0 3px #fff, inset 0 -3px #fff; }
.selStart { box-shadow: inset 2px 0 #fff, inset 0 3px #fff, inset 0 -3px #fff; }
.sel.selEnd { box-shadow: inset -3px 0 #fff, inset 0 3px #fff, inset 0 -3px #fff; }
.sel .cell { clip-path: inset(3px -2000px 3px 0); }
.sel.clip .cell { clip-path: inset(3px 0); }
.num .cell { justify-content: flex-end; padding-right: 1px; }
.copied { box-shadow: none; outline: 2px dashed #2f7d3c; outline-offset: -2px; }
.current { background: #fff; outline: 1px solid #4d9a63; outline-offset: -2px; }
.cmt, .err { position: absolute; top: 0; width: 6px; height: 6px; }
.cmt { right: 1px; background: #d81e1e; clip-path: polygon(0 0, 100% 0, 100% 100%); }
.err { left: 0; background: #2f7d2f; clip-path: polygon(0 0, 100% 0, 0 100%); }
.vscroll { display: flex; flex-direction: column; align-items: center; width: 21px; padding-top: 20px; box-sizing: border-box; font-size: 7px; line-height: 14px; color: #666; }
.vscroll b { font-weight: 400; height: 14px; }
.track { flex: 1; padding-top: 9px; }
.track i { display: block; width: 10px; height: 71%; border-radius: 5px; background: #cfcfd2; }

.sheetbar { display: flex; align-items: center; height: 32px; flex: none; box-sizing: border-box; border-top: 1px solid #d3d2d2; background: #f0ece8; padding-bottom: 3px; }
.navs { display: flex; padding: 0 9px 0 10px; color: #777; }
.navs .bare { width: 26px; }
.sheet { height: 20px; padding: 0 14px 0 15px; border-right: 1px solid #dcd8d6; }
.sheet.on { align-self: flex-start; width: 42px; height: 28px; padding: 0; border: 0; border-radius: 0 0 6px 6px; background: #fff; color: #14804c; font-weight: 700; }
.add { width: 28px; }
.hscroll { display: flex; align-items: center; justify-content: space-between; gap: 11px; width: 738px; margin-left: auto; margin-right: 23px; font-size: 7px; color: #444; }
.hscroll b { width: 10px; text-align: center; }
.bar { width: 1px; height: 10px; background: #777; }
.htrack { flex: 1; }
.htrack i { display: block; width: 67%; height: 10px; border-radius: 5px; background: #cfcdca; }
.side { display: flex; flex-direction: column; align-items: center; width: 67px; padding-top: 12px; }
.side .bare { height: 48px; width: 48px; }
.side .bare:first-child { height: 34px; }
.side .pale { color: #999; }

.status { display: flex; align-items: center; height: 28px; flex: none; padding: 0 13px 2px 18px; background: #efece9; border-top: 1px solid #d9d6d4; box-sizing: border-box; }
.status > .vline { margin: 0 16px; }
.sums { display: flex; gap: 16px; margin-left: 20px; font-size: 15px; }
.views { display: flex; align-items: center; margin-left: auto; }
.v30 { width: 30px; }
.v38 { width: 38px; }
.v48 { width: 48px; }
.reading { width: 46px; height: 26px; border: 1px solid #cfccca; border-radius: 4px; gap: 6px; margin: 0 5px 0 6px; box-sizing: border-box; }
.reading span { display: flex; align-items: center; justify-content: center; width: 27px; height: 26px; background: #d7d5d5; }
.views .vline { margin: 0 5px; }
.zoomsel { display: flex; align-items: center; gap: 14px; margin-left: 18px; font-size: 15px; color: #555; }
.zoomsel select { width: 36px; }
.slider { appearance: none; width: 126px; height: 14px; background: linear-gradient(#3644b5, #3644b5) 0 50% / 36% 2px no-repeat, linear-gradient(#b9b9b9, #b9b9b9) 0 50% / 100% 2px no-repeat; }
.slider::-webkit-slider-thumb { appearance: none; width: 13px; height: 13px; border-radius: 50%; background: #777; border: 4px solid #fff; box-sizing: border-box; box-shadow: 0 0 2px #888; }

.taskbar { display: flex; align-items: center; height: 48px; flex: none; background: linear-gradient(90deg, #403b35, #3e383a 30%, #3d3930 70%, #403a38); color: #fff; }
.app-btn { width: 59px; height: 48px; box-sizing: border-box; }
.app-btn.open { background: linear-gradient(#76b9ed, #76b9ed) 50% 100% / 48px 3px no-repeat; }
.app-btn.active { background: linear-gradient(#76b9ed, #76b9ed) 50% 100% / 100% 3px no-repeat, #69645f; }
.flip svg { transform: scaleX(-1); }
.tray { display: flex; align-items: center; gap: 10px; margin-left: auto; padding-right: 29px; }
.sixty { color: #f0c728; font-size: 14px; }
.ime { font-size: 20px; margin-left: -4px; }
.clock { display: flex; flex-direction: column; align-items: center; width: 80px; font-size: 15px; line-height: 22px; padding-bottom: 2px; }
.clock + svg { margin-left: 8px; }

.hexbird { position: absolute; right: 39px; top: 590px; width: 60px; height: 68px; }
.paper { position: absolute; right: 0; top: 801px; width: 58px; height: 56px; }
.mouse { position: absolute; left: 136px; top: 775px; width: 18px; height: 18px; }
</style>
